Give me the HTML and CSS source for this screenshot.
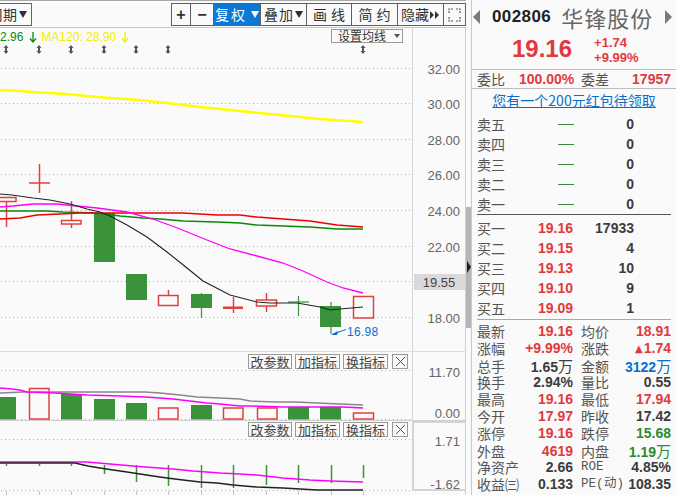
FILE: index.html
```html
<!DOCTYPE html>
<html lang="zh-CN">
<head>
<meta charset="utf-8">
<title>华锋股份 002806</title>
<link rel="stylesheet" href="styles.css">
</head>
<body>
<div class="app">
  <section class="left">
    <header class="toolbar">
      <div class="period">周期<i class="tri dk"></i></div>
      <nav class="tools">
        <span class="tb w18 sym">+</span>
        <span class="tb w23 sym">−</span>
        <span class="tb w47 active">复权<i class="tri wt"></i></span>
        <span class="tb w46">叠加<i class="tri dk"></i></span>
        <span class="tb w45 sp">画线</span>
        <span class="tb w46 sp">简约</span>
        <span class="tb w46 tight">隐藏<svg class="ff" width="9" height="8" viewBox="0 0 9 8"><path d="M0,0 L4,4 L0,8 Z M5,0 L9,4 L5,8 Z" fill="#333"/></svg></span>
        <span class="tb w22"><svg width="13" height="14" viewBox="0 0 13 14"><path d="M1,5 V1 H5 M8,1 H12 V5 M1,9 V13 H5 M8,13 H12 V9" fill="none" stroke="#555" stroke-width="1.2" stroke-dasharray="2 1"/></svg></span>
      </nav>
    </header>

    <div class="panel price">
      <svg class="chart" width="465" height="323" viewBox="0 28 465 323">
        <g stroke="#b0b0b0" stroke-dasharray="1 3">
          <line x1="1" x2="412" y1="68.5" y2="68.5"/>
          <line x1="1" x2="412" y1="103.5" y2="103.5"/>
          <line x1="1" x2="412" y1="139.5" y2="139.5"/>
          <line x1="1" x2="412" y1="174.5" y2="174.5"/>
          <line x1="1" x2="412" y1="210.5" y2="210.5"/>
          <line x1="1" x2="412" y1="246.5" y2="246.5"/>
          <line x1="1" x2="412" y1="281.5" y2="281.5"/>
          <line x1="1" x2="412" y1="317.5" y2="317.5"/>
        </g>
        <line x1="412.5" x2="412.5" y1="28" y2="351" stroke="#d6d6d6"/>
        <!-- legend arrows -->
        <g stroke-width="1.3" fill="none">
          <path d="M33,32 V42 M30,38.5 L33,42 L36,38.5" stroke="#0a8a0a"/>
          <path d="M125,32 V42 M122,38.5 L125,42 L128,38.5" stroke="#eeee00"/>
        </g>
        <g fill="#555">
          <path d="M6,45 l2.5,3 h-1.5 v3 h1.5 l-2.5,3 l-2.5,-3 h1.5 v-3 h-1.5 z"/>
          <path d="M39,45 l2.5,3 h-1.5 v3 h1.5 l-2.5,3 l-2.5,-3 h1.5 v-3 h-1.5 z"/>
          <path d="M71,45 l2.5,3 h-1.5 v3 h1.5 l-2.5,3 l-2.5,-3 h1.5 v-3 h-1.5 z"/>
          <path d="M104,45 l2.5,3 h-1.5 v3 h1.5 l-2.5,3 l-2.5,-3 h1.5 v-3 h-1.5 z"/>
          <path d="M136,45 l2.5,3 h-1.5 v3 h1.5 l-2.5,3 l-2.5,-3 h1.5 v-3 h-1.5 z"/>
          <path d="M168,45 l2.5,3 h-1.5 v3 h1.5 l-2.5,3 l-2.5,-3 h1.5 v-3 h-1.5 z"/>
          <path d="M363,45 l2.5,3 h-1.5 v3 h1.5 l-2.5,3 l-2.5,-3 h1.5 v-3 h-1.5 z"/>
        </g>
        <g stroke="#e0403f" stroke-width="1.5" fill="none">
          <rect x="-4" y="197.5" width="20" height="4"/>
          <line x1="6.5" x2="6.5" y1="201.5" y2="227"/>
          <line x1="29" x2="50" y1="183" y2="183"/>
          <line x1="39.5" x2="39.5" y1="164" y2="193"/>
          <rect x="61.5" y="220.5" width="19.5" height="3.5"/>
          <line x1="71.5" x2="71.5" y1="201" y2="220.5"/>
          <line x1="71.5" x2="71.5" y1="224" y2="228"/>
          <rect x="158.5" y="295.5" width="19.5" height="10"/>
          <line x1="168.5" x2="168.5" y1="290" y2="295.5"/>
          <line x1="233.5" x2="233.5" y1="297" y2="313"/>
          <rect x="256.5" y="300" width="20" height="6"/>
          <line x1="266.5" x2="266.5" y1="293" y2="300"/>
          <line x1="266.5" x2="266.5" y1="306" y2="312"/>
          <rect x="353.5" y="296.5" width="20" height="21.5"/>
        </g>
        <rect x="223" y="306.5" width="20" height="2.5" fill="#e0403f"/>
        <g fill="#3a923a">
          <rect x="94" y="213" width="21" height="49"/>
          <rect x="126" y="274" width="21" height="26"/>
          <rect x="191" y="294" width="21" height="14"/>
          <rect x="320" y="306" width="21" height="21"/>
        </g>
        <g stroke="#3a923a" stroke-width="1.2">
          <line x1="201.5" x2="201.5" y1="293" y2="318"/>
          <line x1="288" x2="309" y1="302" y2="302"/>
          <line x1="298.5" x2="298.5" y1="296" y2="316"/>
          <line x1="331" x2="331" y1="302" y2="334"/>
        </g>
        <g fill="none">
          <polyline stroke="#ffff00" stroke-width="2.5" points="0,90 20,91 40,92.5 67,94 87,96 110,98 140,100 167,103 200,107 240,111 280,115 320,119 363,122"/>
          <polyline stroke="#0a8a0a" stroke-width="1.5" points="0,211 47,211 63,212 97,213 120,216 143,218 160,219 183,221 217,222 240,223 257,225 283,226 310,227 337,229 363,229"/>
          <polyline stroke="#f00000" stroke-width="1.5" points="0,219 20,218 37,215 60,214 80,213 100,213 133,213 183,213 217,215 240,215 257,217 283,219 310,221 337,225 363,227"/>
          <polyline stroke="#ff00ff" stroke-width="1.3" points="0,207 13,206 33,204 57,204 77,206 97,208 127,212 153,219 180,229 207,240 230,249 257,256 283,263 303,271 327,282 343,288 363,293"/>
          <polyline stroke="#222" stroke-width="1.1" points="0,194 12,195 33,198 50,200 70,204 87,209 100,212 110,216 127,225 147,237 167,252 187,268 203,281 230,295 257,302 270,303 297,303 320,307 330,310 340,309 363,307"/>
        </g>
        <path d="M333,334 L346,329.5" stroke="#0a6fd0" stroke-width="1"/>
        <path d="M331,335 L338,331 L337,335 Z" fill="#0a6fd0"/>
        <text class="lowlbl" x="347" y="336">16.98</text>
        <g class="ax">
          <text x="460" y="74">32.00</text>
          <text x="460" y="109">30.00</text>
          <text x="460" y="145">28.00</text>
          <text x="460" y="180">26.00</text>
          <text x="460" y="216">24.00</text>
          <text x="460" y="252">22.00</text>
          <text x="460" y="323">18.00</text>
        </g>
        <rect x="414" y="274" width="51" height="16" fill="#d9d9d9"/>
        <text class="ax cur" x="439" y="287">19.55</text>
      </svg>
      <div class="legend"><span class="g">2.96</span><span class="y">MA120: 28.90</span></div>
      <div class="ma-set">设置均线<i class="tri sm"></i></div>
    </div>

    <div class="panel vol">
      <svg class="chart" width="465" height="68" viewBox="0 352 465 68">
        <g stroke="#b0b0b0" stroke-dasharray="1 3">
          <line x1="1" x2="412" y1="370.5" y2="370.5"/>
          <line x1="1" x2="412" y1="419.5" y2="419.5"/>
        </g>
        <line x1="412.5" x2="412.5" y1="352" y2="420" stroke="#d6d6d6"/>
        <g fill="#3a923a">
          <rect x="-4" y="397" width="20" height="22.5"/>
          <rect x="61" y="394" width="21" height="25.5"/>
          <rect x="94" y="399" width="21" height="20.5"/>
          <rect x="126" y="403" width="21" height="16.5"/>
          <rect x="191" y="405" width="21" height="14.5"/>
          <rect x="288" y="407" width="21" height="12.5"/>
          <rect x="320" y="407" width="21" height="12.5"/>
        </g>
        <g stroke="#e0403f" stroke-width="1.5" fill="none">
          <rect x="29.5" y="388.5" width="19.5" height="30.5"/>
          <rect x="158.5" y="408" width="19.5" height="11"/>
          <rect x="223.5" y="408" width="19.5" height="11"/>
          <rect x="257.5" y="408" width="19.5" height="11"/>
          <rect x="353.5" y="413" width="20" height="6"/>
        </g>
        <g fill="none">
          <polyline stroke="#888" stroke-width="1.5" points="0,393 23,392 55,392 145,392 160,393 180,395 197,397 220,398 240,399 250,401 277,402 297,402 317,403 340,404 363,405"/>
          <polyline stroke="#ff00ff" stroke-width="1.5" points="0,388 12,389 20,390 27,392 55,393 87,395 120,396 145,397 160,398 173,399 190,401 207,403 220,404 240,406 250,406 283,407 343,407 363,408"/>
        </g>
        <g class="ax">
          <text x="460" y="377">11.70</text>
          <text x="460" y="418">0.00</text>
        </g>
      </svg>
      <div class="ind-tools">
        <span class="it">改参数</span><span class="it">加指标</span><span class="it">换指标</span><span class="it x"><svg width="11" height="11" viewBox="0 0 11 11"><path d="M1,1 L10,10 M10,1 L1,10" stroke="#555" stroke-width="1"/></svg></span>
      </div>
    </div>

    <div class="panel macd">
      <svg class="chart" width="465" height="74" viewBox="0 421 465 74">
        <g stroke="#b0b0b0" stroke-dasharray="1 3">
          <line x1="1" x2="412" y1="439.5" y2="439.5"/>
          <line x1="1" x2="412" y1="490.5" y2="490.5"/>
        </g>
        <g stroke="#c4c4c4">
          <line x1="6.5" x2="6.5" y1="491" y2="495"/>
          <line x1="39.5" x2="39.5" y1="491" y2="495"/>
          <line x1="71.5" x2="71.5" y1="491" y2="495"/>
          <line x1="104.5" x2="104.5" y1="491" y2="495"/>
          <line x1="136.5" x2="136.5" y1="491" y2="495"/>
          <line x1="168.5" x2="168.5" y1="491" y2="495"/>
          <line x1="201.5" x2="201.5" y1="491" y2="495"/>
          <line x1="233.5" x2="233.5" y1="491" y2="495"/>
          <line x1="266.5" x2="266.5" y1="491" y2="495"/>
          <line x1="298.5" x2="298.5" y1="491" y2="495"/>
          <line x1="331.5" x2="331.5" y1="491" y2="495"/>
          <line x1="363.5" x2="363.5" y1="491" y2="495"/>
        </g>
        <rect x="413" y="422" width="60" height="68" fill="none" stroke="#d4d4d4" stroke-width="2"/>
        <g stroke="#3a923a" stroke-width="1.5">
          <line x1="104.5" x2="104.5" y1="465" y2="474"/>
          <line x1="136.5" x2="136.5" y1="465" y2="482"/>
          <line x1="168.5" x2="168.5" y1="465" y2="486"/>
          <line x1="201.5" x2="201.5" y1="465" y2="488"/>
          <line x1="233.5" x2="233.5" y1="465" y2="488"/>
          <line x1="266.5" x2="266.5" y1="465" y2="485"/>
          <line x1="298.5" x2="298.5" y1="465" y2="483"/>
          <line x1="331.5" x2="331.5" y1="465" y2="483"/>
          <line x1="363.5" x2="363.5" y1="465" y2="478"/>
          <line x1="6.5" x2="6.5" y1="464" y2="466"/>
          <line x1="71.5" x2="71.5" y1="464" y2="466"/>
        </g>
        <line x1="39.5" x2="39.5" y1="464" y2="466" stroke="#e0403f" stroke-width="1.5"/>
        <g fill="none">
          <polyline stroke="#ff00ff" stroke-width="1.5" points="0,462 87,462 110,464 133,466 145,467 173,469 193,471 220,473 240,474 257,475 283,478 310,480 330,481 363,482"/>
          <polyline stroke="#222" stroke-width="1.5" points="0,463 75,463 88,466 100,468 113,470 127,472 140,474 153,476 167,478 183,480 200,482 217,483 233,485 257,487 283,488 317,490 363,490"/>
        </g>
        <g class="ax">
          <text x="460" y="446">1.71</text>
          <text x="460" y="489">-1.62</text>
        </g>
      </svg>
      <div class="ind-tools">
        <span class="it">改参数</span><span class="it">加指标</span><span class="it">换指标</span><span class="it x"><svg width="11" height="11" viewBox="0 0 11 11"><path d="M1,1 L10,10 M10,1 L1,10" stroke="#555" stroke-width="1"/></svg></span>
      </div>
    </div>
  </section>

  <aside class="scroll"><div class="thumb"></div><i class="grip"></i></aside>

  <aside class="right">
    <div class="head">
      <i class="nav-l"></i>
      <span class="code">002806</span>
      <span class="name">华锋股份</span>
      <i class="nav-r"></i>
    </div>
    <div class="quote">
      <span class="last">19.16</span>
      <div class="chg"><span>+1.74</span><span>+9.99%</span></div>
    </div>
    <div class="wb">
      <span class="lbl">委比</span><span class="val r">100.00%</span><span></span><span class="lbl">委差</span><span class="val r">17957</span>
    </div>
    <div class="promo"><a class="link">您有一个200元红包待领取</a></div>

    <div class="book sell">
      <div class="brow"><span class="lbl">卖五</span><span class="val"><i class="dash"></i></span><span class="val d">0</span></div>
      <div class="brow"><span class="lbl">卖四</span><span class="val"><i class="dash"></i></span><span class="val d">0</span></div>
      <div class="brow"><span class="lbl">卖三</span><span class="val"><i class="dash"></i></span><span class="val d">0</span></div>
      <div class="brow"><span class="lbl">卖二</span><span class="val"><i class="dash"></i></span><span class="val d">0</span></div>
      <div class="brow"><span class="lbl">卖一</span><span class="val"><i class="dash"></i></span><span class="val d">0</span></div>
    </div>
    <div class="book buy">
      <div class="brow"><span class="lbl">买一</span><span class="val r">19.16</span><span class="val d">17933</span></div>
      <div class="brow"><span class="lbl">买二</span><span class="val r">19.15</span><span class="val d">4</span></div>
      <div class="brow"><span class="lbl">买三</span><span class="val r">19.13</span><span class="val d">10</span></div>
      <div class="brow"><span class="lbl">买四</span><span class="val r">19.10</span><span class="val d">9</span></div>
      <div class="brow"><span class="lbl">买五</span><span class="val r">19.09</span><span class="val d">1</span></div>
    </div>

    <div class="stats">
      <div class="srow"><span class="lbl">最新</span><span class="val r">19.16</span><span></span><span class="lbl">均价</span><span class="val r">18.91</span></div>
      <div class="srow"><span class="lbl">涨幅</span><span class="val r">+9.99%</span><span></span><span class="lbl">涨跌</span><span class="val r"><span class="up">▲</span>1.74</span></div>
      <div class="srow"><span class="lbl">总手</span><span class="val d">1.65<span class="u">万</span></span><span></span><span class="lbl">金额</span><span class="val b">3122<span class="u">万</span></span></div>
      <div class="srow"><span class="lbl">换手</span><span class="val d">2.94%</span><span></span><span class="lbl">量比</span><span class="val d">0.55</span></div>
      <div class="srow"><span class="lbl">最高</span><span class="val r">19.16</span><span></span><span class="lbl">最低</span><span class="val r">17.94</span></div>
      <div class="srow"><span class="lbl">今开</span><span class="val r">17.97</span><span></span><span class="lbl">昨收</span><span class="val d">17.42</span></div>
      <div class="srow"><span class="lbl">涨停</span><span class="val r">19.16</span><span></span><span class="lbl">跌停</span><span class="val g">15.68</span></div>
      <div class="srow"><span class="lbl">外盘</span><span class="val r">4619</span><span></span><span class="lbl">内盘</span><span class="val g">1.19<span class="u">万</span></span></div>
      <div class="srow"><span class="lbl">净资产</span><span class="val d">2.66</span><span></span><span class="lbl mono">ROE</span><span class="val d">4.85%</span></div>
      <div class="srow"><span class="lbl">收益㈢</span><span class="val d">0.133</span><span></span><span class="lbl mono">PE(动)</span><span class="val d">108.35</span></div>
      <div class="srow"><span class="lbl">总股本</span><span class="val d">1.08<span class="u">亿</span></span><span></span><span class="lbl">流通股</span><span class="val d">0.53<span class="u">亿</span></span></div>
    </div>
  </aside>
</div>
</body>
</html>
```

FILE: styles.css
```css
* { box-sizing: border-box; margin: 0; padding: 0; }
html, body { width: 676px; height: 495px; overflow: hidden; }
body {
  background: #fafafa;
  font-family: "Liberation Sans", Arial, sans-serif;
  color: #444;
}
i { display: inline-block; font-style: normal; }

.app { display: flex; width: 676px; height: 495px; }

/* ---------- left chart column ---------- */
.left { width: 466px; display: flex; flex-direction: column; flex: none; }

.toolbar {
  height: 28px;
  border-top: 1px solid #a8a8a8;
  border-bottom: 1px solid #c8c8c8;
  padding-top: 2px;
  display: flex;
  justify-content: space-between;
  align-items: flex-start;
  font-family: "Noto Sans CJK SC", sans-serif;
  font-size: 14px;
  color: #333;
}
.period {
  margin-left: -30px;
  width: 62px;
  height: 23px;
  border: 1px solid #666;
  display: flex;
  align-items: center;
  justify-content: flex-end;
  padding-right: 4px;
  gap: 2px;
  line-height: 21px;
}
.tri {
  width: 0; height: 0;
  border-left: 4px solid transparent;
  border-right: 4px solid transparent;
  border-top: 7px solid #333;
}
.tri.wt { border-top-color: #fff; margin-left: 4px; }
.tri.dk { border-top-color: #2c2c3c; }
.tri.sm { border-left-width: 3px; border-right-width: 3px; border-top-width: 4px; border-top-color: #555; margin-left: 8px; }

.tools { display: flex; height: 23px; border: 1px solid #606060; }
.tb {
  height: 21px;
  border-left: 1px solid #606060;
  display: flex;
  align-items: center;
  justify-content: center;
  line-height: 21px;
  letter-spacing: 1px;
}
.tb:first-child { border-left: none; }
.w18 { width: 18px; } .w22 { width: 22px; } .w23 { width: 23px; }
.w45 { width: 45px; } .w46 { width: 46px; } .w47 { width: 47px; }
.tb.sym { font-family: "Liberation Sans", sans-serif; font-weight: bold; font-size: 16px; letter-spacing: 0; }
.tb.sp { letter-spacing: 4px; padding-left: 4px; }
.tb.tight { letter-spacing: 0; justify-content: flex-start; padding-left: 3px; }
.tb.active { background: #0a78d4; color: #fff; letter-spacing: 2px; }
.tb .tri.dk { margin-left: 1px; }
.ff { margin-left: 1px; flex: none; }

.panel {
  position: relative;
  width: 466px;
  border-right: 1px solid #d0d0d0;
  flex: none;
}
.panel.price { height: 324px; border-bottom: 1px solid #dcdcdc; }
.panel.vol { height: 69px; border-bottom: 1px solid #cfcfcf; }
.panel.macd { height: 74px; }
.chart { display: block; }

.ax text, text.ax { font-family: "Liberation Sans", Arial, sans-serif; font-size: 13px; fill: #666; text-anchor: end; }
text.ax.cur { fill: #444; text-anchor: middle; }
.lowlbl { font-family: "Liberation Sans", Arial, sans-serif; font-size: 12px; fill: #0a6fd0; letter-spacing: 0.3px; }

.legend {
  position: absolute;
  left: 0; top: 2px;
  display: flex;
  gap: 18px;
  font-size: 12px;
  line-height: 14px;
  white-space: nowrap;
}
.legend .g { color: #0a8a0a; }
.legend .y { color: #eeee00; }

.ma-set {
  position: absolute;
  left: 331px; top: 1px;
  width: 72px; height: 14px;
  border: 1px solid #9a9a9a;
  display: flex;
  align-items: center;
  padding-left: 6px;
  font-family: "Noto Sans CJK SC", sans-serif;
  font-size: 12px;
  line-height: 12px;
  color: #333;
}

.ind-tools {
  position: absolute;
  right: 57px; top: 2px;
  display: flex;
  gap: 3px;
}
.panel.macd .ind-tools { top: 1px; }
.it {
  height: 15px;
  width: 45px;
  border: 1px solid #9a9a9a;
  font-family: "Noto Sans CJK SC", sans-serif;
  font-size: 13px;
  line-height: 13px;
  color: #444;
  display: flex;
  align-items: center;
  justify-content: center;
  background: #fafafa;
}
.it:first-child { width: 44px; }
.it.x { width: 16px; margin-left: 1px; }

/* ---------- scroll strip ---------- */
.scroll { width: 5px; position: relative; flex: none; }
.thumb { margin-top: 207px; height: 121px; background: #b5b5b5; }
.grip {
  position: absolute;
  left: 1px; top: 261px;
  width: 0; height: 0;
  border-left: 4px solid #1e1e1e;
  border-top: 6px solid transparent;
  border-bottom: 6px solid transparent;
}

/* ---------- right quote panel ---------- */
.right {
  width: 205px;
  flex: none;
  border-left: 1px solid #c8c8c8;
  font-family: "Noto Sans CJK SC", sans-serif;
  overflow: hidden;
}
.head { height: 34px; display: flex; align-items: center; padding-left: 1px; }
.nav-l {
  width: 0; height: 0;
  border-top: 7px solid transparent;
  border-bottom: 7px solid transparent;
  border-right: 7px solid #7a7a7a;
}
.nav-r {
  width: 0; height: 0;
  margin-left: auto; margin-right: 4px;
  border-top: 7px solid transparent;
  border-bottom: 7px solid transparent;
  border-left: 7px solid #7a7a7a;
}
.code { margin-left: 12px; font-family: "Liberation Sans", Arial, sans-serif; font-weight: bold; font-size: 17px; letter-spacing: 0.4px; color: #222; }
.name { margin-left: 10px; font-size: 22px; line-height: 26px; letter-spacing: 1px; color: #666; }

.quote {
  height: 36px;
  border-bottom: 1px solid #bdbdbd;
  display: flex;
  align-items: center;
  padding: 0 0 5px 40px;
}
.last { font-family: "Liberation Sans", Arial, sans-serif; font-weight: bold; font-size: 24px; line-height: 26px; color: #e03a3e; }
.chg {
  margin-left: 22px; margin-top: 2px;
  display: flex; flex-direction: column;
  font-family: "Liberation Sans", Arial, sans-serif;
  font-weight: bold; font-size: 13px; line-height: 15px;
  color: #e03a3e;
}

.wb, .srow {
  display: grid;
  grid-template-columns: 42px 54px 8px 44px 46px;
  align-items: center;
}
.wb { height: 19px; border-bottom: 1px solid #bdbdbd; padding-left: 5px; }

.promo { height: 20px; text-align: center; line-height: 20px; }
.link { color: #0b6fc6; text-decoration: underline; font-size: 14px; }

.lbl { font-size: 14px; line-height: 17px; color: #555; white-space: nowrap; }
.lbl.mono { font-family: "Liberation Mono", monospace; font-size: 12.5px; }
.val {
  font-family: "Liberation Sans", Arial, sans-serif;
  font-weight: bold;
  font-size: 14px;
  line-height: 17px;
  text-align: right;
  white-space: nowrap;
}
.r { color: #e03a3e; }
.g { color: #2f8a2f; }
.b { color: #0a6fd0; }
.d { color: #3c3c3c; }
.u { font-family: "Noto Sans CJK SC", sans-serif; font-weight: normal; font-size: 15px; }
.up { font-family: "DejaVu Sans", sans-serif; font-size: 10px; margin-right: 1px; vertical-align: 1px; }

.book { margin: 0 5px; }
.sell { margin-top: 5px; border-bottom: 1px solid #555; }
.buy { padding: 3px 0 1px; border-bottom: 1px solid #a8a8a8; }
.brow {
  height: 20px;
  display: grid;
  grid-template-columns: 42px 54px 61px;
  align-items: center;
}
.dash { width: 16px; height: 1px; background: #3a8a3a; vertical-align: middle; margin-right: -1px; }

.stats { padding: 3px 5px 0; }
.srow { height: 17px; }
```
